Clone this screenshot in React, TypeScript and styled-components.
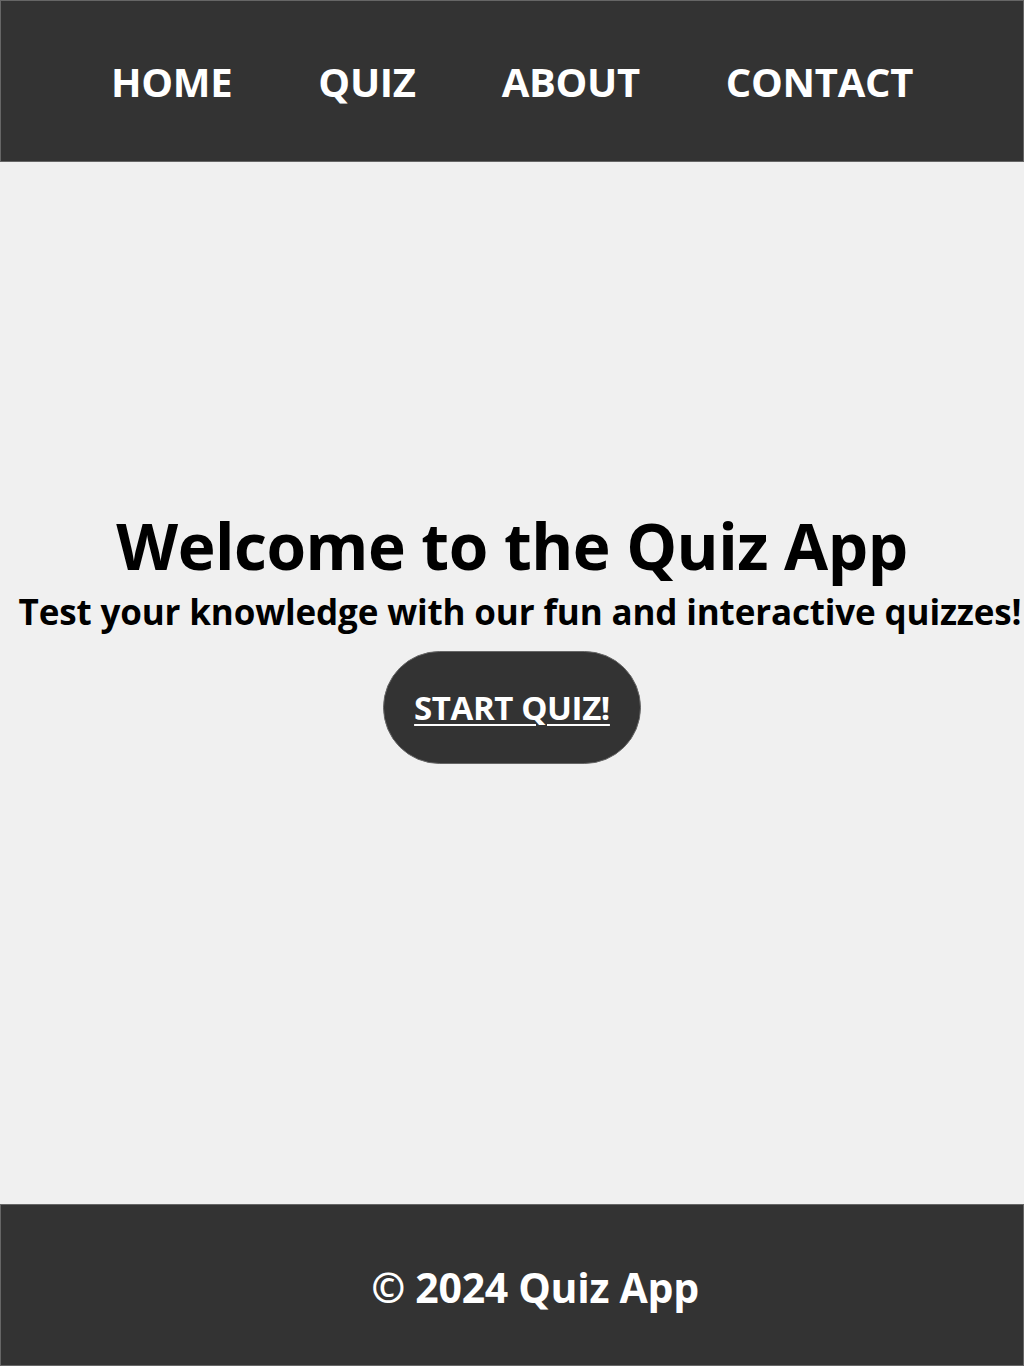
import React from "react";
import styled, { createGlobalStyle } from "styled-components";

const GlobalStyle = createGlobalStyle`
  html, body { margin: 0; padding: 0; }
  body {
    background: #f0f0f0;
    font-family: "Open Sans", "Noto Sans", sans-serif;
    font-weight: 700;
    color: #000;
  }
`;

const Page = styled.div`
  min-height: 1366px;
  display: flex;
  flex-direction: column;
`;

const Header = styled.header`
  height: 162px;
  box-sizing: border-box;
  background: #333;
  border: 1px solid #666;
  display: flex;
  align-items: center;
  justify-content: center;
`;

const Nav = styled.nav`
  display: flex;
  gap: 86px;
`;

const NavLink = styled.a`
  color: #fff;
  text-decoration: none;
  text-transform: uppercase;
  font-size: 40px;
  font-weight: 700;
  letter-spacing: -0.3px;
`;

const Main = styled.main`
  flex: 1;
  display: flex;
  flex-direction: column;
  align-items: center;
  justify-content: center;
  padding-bottom: 94px;
`;

const Title = styled.h1`
  margin: 0;
  font-size: 64px;
  line-height: 1.2;
  letter-spacing: -0.5px;
`;

const Subtitle = styled.h2`
  margin: 6px 0 18px 16px;
  font-size: 35px;
  line-height: 1.2;
  white-space: nowrap;
  letter-spacing: -0.15px;
`;

const StartButton = styled.a`
  display: flex;
  align-items: center;
  justify-content: center;
  width: 258px;
  height: 113px;
  box-sizing: border-box;
  border-radius: 57px;
  background: #333;
  border: 1px solid #666;
  color: #fff;
  font-size: 33px;
  text-decoration: underline;
  text-underline-offset: 4px;
  text-decoration-thickness: 2px;
  letter-spacing: -0.4px;
`;

const Footer = styled.footer`
  height: 162px;
  box-sizing: border-box;
  background: #333;
  border: 1px solid #666;
  display: flex;
  align-items: center;
  justify-content: center;
  padding-left: 46px;
  padding-top: 3px;
`;

const FooterText = styled.p`
  margin: 0;
  color: #fff;
  font-size: 41px;
  letter-spacing: -0.3px;
`;

export default function App() {
  return (
    <Page>
      <GlobalStyle />
      <Header>
        <Nav>
          <NavLink href="#">Home</NavLink>
          <NavLink href="#">Quiz</NavLink>
          <NavLink href="#">About</NavLink>
          <NavLink href="#">Contact</NavLink>
        </Nav>
      </Header>
      <Main>
        <Title>Welcome to the Quiz App</Title>
        <Subtitle>Test your knowledge with our fun and interactive quizzes!</Subtitle>
        <StartButton href="#">START QUIZ!</StartButton>
      </Main>
      <Footer>
        <FooterText>© 2024 Quiz App</FooterText>
      </Footer>
    </Page>
  );
}
